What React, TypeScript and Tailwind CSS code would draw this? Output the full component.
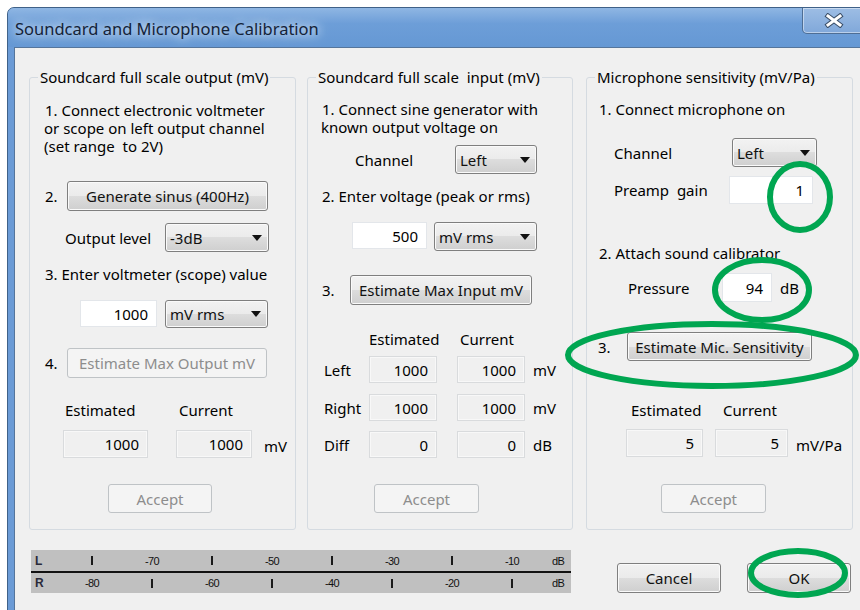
import React from "react";

const BTN =
  "flex items-center justify-center rounded-[3px] border border-[#7f7f7f] bg-[linear-gradient(#f2f2f2_0%,#ebebeb_50%,#dddddd_50%,#cfcfcf_100%)] shadow-[inset_0_0_0_1px_#fafafa] text-[#111]";
const BTN_OFF =
  "flex items-center justify-center rounded-[3px] border border-[#bfc3c6] bg-[#f4f4f4] text-[#8d8d8d]";
const FS = "h-[463px] shrink-0 rounded-[3px] border border-[#d5dbe1]";
const LEG = "ml-[8px] px-[2px] leading-[20px] whitespace-pre";

function Button({
  className,
  off,
  children,
}: {
  className: string;
  off?: boolean;
  children: React.ReactNode;
}) {
  return <div className={(off ? BTN_OFF : BTN) + " " + className}>{children}</div>;
}

function Select({ className, value }: { className: string; value: string }) {
  return (
    <div className={BTN + " !justify-between pl-[4px] pr-[6px] " + className}>
      <span>{value}</span>
      <svg width="10" height="6" viewBox="0 0 10 6">
        <polygon points="0,0 10,0 5,6" fill="#111" />
      </svg>
    </div>
  );
}

function Field({ className, value, ro }: { className: string; value: string; ro?: boolean }) {
  return (
    <div
      className={
        "flex items-center justify-end pr-[8px] border " +
        (ro
          ? "bg-[#f0f0f0] border-[#d9dbdd] shadow-[inset_0_0_0_1px_#f8f8f8] "
          : "bg-white border-[#e3e6ea] ") +
        className
      }
    >
      {value}
    </div>
  );
}

function Tick() {
  return <span className="block w-[2px] h-[9px] bg-[#1a1a1a]" />;
}

function MeterRow({ label, cells, h }: { label: string; cells: string[]; h: string }) {
  return (
    <div className={"flex items-center " + h}>
      <span className="w-[31px] pl-[4px] font-bold text-[12px] text-[#2a2a3a]">{label}</span>
      {cells.map((c, i) => (
        <span key={i} className="w-[60px] flex justify-center">
          {c === "|" ? <Tick /> : c}
        </span>
      ))}
      <span className="ml-[10px]">dB</span>
    </div>
  );
}

function CloseGlyph() {
  return (
    <svg width="20" height="15" viewBox="0 0 20 15">
      <g strokeLinecap="square">
        <path d="M4 3 L16 12 M16 3 L4 12" stroke="#3b4f68" strokeWidth="5" />
        <path d="M4 3 L16 12 M16 3 L4 12" stroke="#ffffff" strokeWidth="3" />
      </g>
    </svg>
  );
}

export default function App() {
  return (
    <div className="relative w-[860px] h-[610px] overflow-hidden bg-white font-['Noto_Sans',sans-serif] text-[15px] leading-[20px] text-black">
      {/* window */}
      <div className="ml-[7px] mt-[7px] w-[875px] h-[620px] flex flex-col rounded-t-[7px] border border-[#3f6188] bg-[linear-gradient(90deg,#6b9bd6,#79a7dc)]">
        {/* title bar */}
        <div className="h-[39px] flex items-start justify-between rounded-t-[6px] bg-[linear-gradient(180deg,#8fb6e3_0%,#6d9ed8_40%,#6598d4_100%)]">
          <div className="pl-[7px] pt-[11px] text-[16.5px] text-[#142338] [text-shadow:0_0_8px_#e9f2fb,0_0_14px_#dbe9f8]">
            Soundcard and Microphone Calibration
          </div>
          <div className="mr-[15px] w-[64px] h-[26px] flex items-center justify-center rounded-b-[5px] border border-t-0 border-[#4e6e95] bg-[linear-gradient(180deg,#9dbde4,#80a8da)] shadow-[inset_0_0_0_1px_rgba(255,255,255,0.45)]">
            <CloseGlyph />
          </div>
        </div>
        {/* frame + client */}
        <div className="flex-1 flex pl-[6px]">
          <div className="flex-1 border-l border-t border-[#55759b] bg-[#f0f0f0] pl-[14px] pt-[19px]">
            <div className="flex">
              {/* output group */}
              <fieldset className={FS + " w-[267px]"}>
                <legend className={LEG}>Soundcard full scale output (mV)</legend>
                <div className="mt-[14px] ml-[15px] leading-[18px]">
                  <div>1. Connect electronic voltmeter</div>
                  <div className="-ml-[1px]">or scope on left output channel</div>
                  <div className="-ml-[1px] whitespace-pre">(set range  to 2V)</div>
                </div>
                <div className="mt-[26px] ml-[15px] flex items-center">
                  <span className="w-[22px]">2.</span>
                  <Button className="w-[201px] h-[30px]">Generate sinus (400Hz)</Button>
                </div>
                <div className="mt-[12px] ml-[35px] flex items-center">
                  <span className="w-[100px]">Output level</span>
                  <Select className="w-[104px] h-[29px]" value="-3dB" />
                </div>
                <div className="mt-[12px] ml-[15px]">3. Enter voltmeter (scope) value</div>
                <div className="mt-[16px] ml-[50px] flex items-start">
                  <Field className="w-[77px] h-[27px]" value="1000" />
                  <Select className="ml-[8px] w-[103px] h-[28px]" value="mV rms" />
                </div>
                <div className="mt-[20px] ml-[15px] flex items-center">
                  <span className="w-[22px]">4.</span>
                  <Button off className="w-[200px] h-[30px]">
                    Estimate Max Output mV
                  </Button>
                </div>
                <div className="mt-[22px] ml-[35px] flex">
                  <span className="w-[114px]">Estimated</span>
                  <span>Current</span>
                </div>
                <div className="mt-[10px] ml-[33px] flex items-center">
                  <Field ro className="w-[85px] h-[28px]" value="1000" />
                  <Field ro className="ml-[28px] w-[76px] h-[28px]" value="1000" />
                  <span className="ml-[12px] mt-[4px]">mV</span>
                </div>
                <Button off className="mt-[26px] ml-[78px] w-[104px] h-[29px]">
                  Accept
                </Button>
              </fieldset>

              {/* input group */}
              <fieldset className={FS + " ml-[11px] w-[266px]"}>
                <legend className={LEG}>Soundcard full scale  input (mV)</legend>
                <div className="mt-[13px] ml-[14px] leading-[18px]">
                  <div>1. Connect sine generator with</div>
                  <div className="-ml-[1px]">known output voltage on</div>
                </div>
                <div className="mt-[9px] ml-[47px] flex items-center">
                  <span className="w-[100px]">Channel</span>
                  <Select className="w-[82px] h-[29px]" value="Left" />
                </div>
                <div className="mt-[12px] ml-[14px]">2. Enter voltage (peak or rms)</div>
                <div className="mt-[16px] ml-[44px] flex items-start">
                  <Field className="w-[75px] h-[27px]" value="500" />
                  <Select className="ml-[7px] w-[103px] h-[29px]" value="mV rms" />
                </div>
                <div className="mt-[24px] ml-[14px] flex items-center">
                  <span className="w-[28px]">3.</span>
                  <Button className="w-[182px] h-[30px]">Estimate Max Input mV</Button>
                </div>
                <div className="mt-[24px] ml-[61px] flex">
                  <span className="w-[91px]">Estimated</span>
                  <span>Current</span>
                </div>
                {[
                  ["Left", "1000", "1000", "mV", "mt-[7px]"],
                  ["Right", "1000", "1000", "mV", "mt-[11px]"],
                  ["Diff", "0", "0", "dB", "mt-[10px]"],
                ].map(([l, a, b, u, m]) => (
                  <div key={l} className={m + " ml-[16px] flex items-center"}>
                    <span className="w-[45px]">{l}</span>
                    <Field ro className="w-[68px] h-[27px]" value={a} />
                    <Field ro className="ml-[20px] w-[68px] h-[27px]" value={b} />
                    <span className="ml-[8px]">{u}</span>
                  </div>
                ))}
                <Button off className="mt-[26px] ml-[66px] w-[105px] h-[29px]">
                  Accept
                </Button>
              </fieldset>

              {/* microphone group */}
              <fieldset className={FS + " ml-[13px] w-[267px]"}>
                <legend className={LEG}>Microphone sensitivity (mV/Pa)</legend>
                <div className="mt-[12px] ml-[12px]">1. Connect microphone on</div>
                <div className="mt-[19px] ml-[27px] flex items-center">
                  <span className="w-[118px]">Channel</span>
                  <Select className="w-[85px] h-[29px]" value="Left" />
                </div>
                <div className="mt-[9px] ml-[27px] flex items-center">
                  <span className="w-[115px] whitespace-pre">Preamp  gain</span>
                  <Field className="w-[84px] h-[28px]" value="1" />
                </div>
                <div className="mt-[39px] ml-[12px]">2. Attach sound calibrator</div>
                <div className="mt-[10px] ml-[41px] flex items-center">
                  <span className="w-[94px]">Pressure</span>
                  <Field className="w-[50px] h-[29px]" value="94" />
                  <span className="ml-[8px]">dB</span>
                </div>
                <div className="mt-[30px] ml-[11px] flex items-center">
                  <span className="w-[29px]">3.</span>
                  <Button className="w-[185px] h-[29px]">Estimate Mic. Sensitivity</Button>
                </div>
                <div className="mt-[39px] ml-[44px] flex">
                  <span className="w-[92px]">Estimated</span>
                  <span>Current</span>
                </div>
                <div className="mt-[9px] ml-[39px] flex items-center">
                  <Field ro className="w-[77px] h-[28px]" value="5" />
                  <Field ro className="ml-[12px] w-[73px] h-[28px]" value="5" />
                  <span className="ml-[8px] mt-[4px]">mV/Pa</span>
                </div>
                <Button off className="mt-[27px] ml-[74px] w-[105px] h-[29px]">
                  Accept
                </Button>
              </fieldset>
            </div>

            {/* level meter and dialog buttons */}
            <div className="mt-[20px] flex items-start">
              <div className="ml-[2px] w-[540px] h-[43px] flex flex-col bg-[#c0c0c0] font-['Liberation_Sans',sans-serif] text-[11px] leading-[12px] tracking-[-0.7px] text-[#111]">
                <MeterRow
                  h="h-[21px]"
                  label="L"
                  cells={["|", "-70", "|", "-50", "|", "-30", "|", "-10"]}
                />
                <div className="h-[2px] bg-[#111]" />
                <MeterRow
                  h="h-[20px]"
                  label="R"
                  cells={["-80", "|", "-60", "|", "-40", "|", "-20", "|"]}
                />
              </div>
              <Button className="ml-[46px] mt-[13px] w-[104px] h-[30px]">Cancel</Button>
              <Button className="ml-[26px] mt-[13px] w-[104px] h-[30px]">OK</Button>
            </div>
          </div>
        </div>
      </div>

      {/* green highlight marks */}
      <svg
        className="absolute inset-0 pointer-events-none"
        width="860"
        height="610"
        viewBox="0 0 860 610"
      >
        <g fill="none" stroke="#00a651" strokeWidth="6">
          <ellipse cx="800" cy="197" rx="30" ry="33" />
          <ellipse cx="762" cy="290" rx="47" ry="30" />
          <ellipse cx="712" cy="355" rx="144" ry="31" />
          <ellipse cx="798" cy="573" rx="47" ry="22" />
        </g>
      </svg>
    </div>
  );
}
